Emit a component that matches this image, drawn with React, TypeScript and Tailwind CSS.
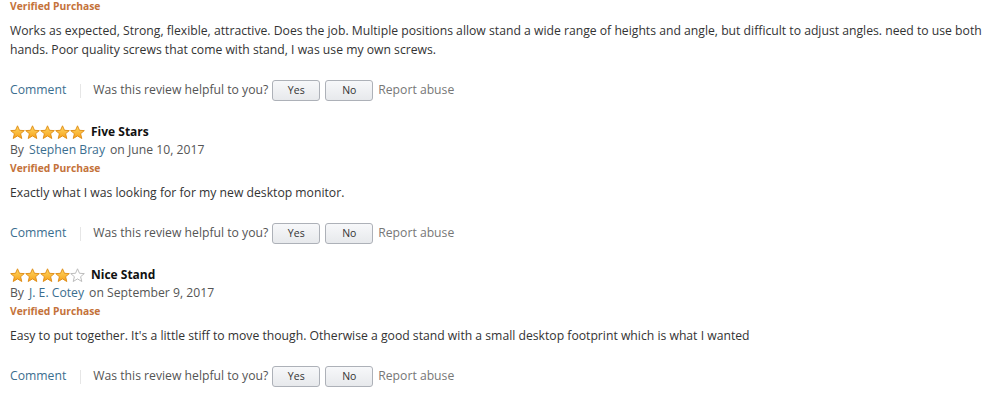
import type { ReactNode } from "react";

type Review = {
  title?: string;
  stars?: number;
  author?: string;
  date?: string;
  body: ReactNode;
};

const reviews: Review[] = [
  {
    body: (
      <>
        Works as expected, Strong, flexible, attractive. Does the job. Multiple positions allow stand a wide range of heights and angle, but difficult to adjust angles. need to use both hands. Poor quality screws that come with stand, I was use my own screws.
      </>
    ),
  },
  {
    title: "Five Stars",
    stars: 5,
    author: "Stephen Bray",
    date: "June 10, 2017",
    body: "Exactly what I was looking for for my new desktop monitor.",
  },
  {
    title: "Nice Stand",
    stars: 4,
    author: "J. E. Cotey",
    date: "September 9, 2017",
    body: "Easy to put together. It's a little stiff to move though. Otherwise a good stand with a small desktop footprint which is what I wanted",
  },
];

function Star({ filled, id }: { filled: boolean; id: string }) {
  const d = "M7.5 0.8 L9.5 5.3 L14.3 5.6 L10.6 8.7 L11.8 13.5 L7.5 10.9 L3.2 13.5 L4.4 8.7 L0.7 5.6 L5.5 5.3 Z";
  return (
    <svg width="15" height="14" viewBox="0 0 15 14">
      <defs>
        <linearGradient id={id} x1="0" y1="0" x2="0" y2="1">
          <stop offset="0" stopColor="#ffd863" />
          <stop offset="1" stopColor="#f7a21b" />
        </linearGradient>
      </defs>
      {filled ? (
        <path d={d} fill={`url(#${id})`} stroke="#de8a12" strokeWidth="0.9" strokeLinejoin="round" />
      ) : (
        <path d={d} fill="#fff" stroke="#b5b5b5" strokeWidth="0.9" strokeLinejoin="round" />
      )}
    </svg>
  );
}

function Stars({ count, keyPrefix }: { count: number; keyPrefix: string }) {
  return (
    <div className="flex items-center">
      {[0, 1, 2, 3, 4].map((i) => (
        <Star key={i} filled={i < count} id={`${keyPrefix}-star-${i}`} />
      ))}
    </div>
  );
}

function HelpfulRow() {
  return (
    <div className="flex items-center h-[21px] text-[12.2px]">
      <span className="text-[#3b6e8f]">Comment</span>
      <span className="ml-[14px] mr-[12px] w-px h-[14px] bg-[#e6e6e6]" />
      <span className="text-[#555]">Was this review helpful to you?</span>
      <button className="ml-[4px] w-[48px] h-[21px] rounded-[3px] border border-[#adb1b8] bg-gradient-to-b from-[#f7f8fa] to-[#e7e9ec] text-[10.5px] text-[#333]">
        Yes
      </button>
      <button className="ml-[5px] w-[48px] h-[21px] rounded-[3px] border border-[#adb1b8] bg-gradient-to-b from-[#f7f8fa] to-[#e7e9ec] text-[10.5px] text-[#333]">
        No
      </button>
      <span className="ml-[5px] text-[#777]">Report abuse</span>
    </div>
  );
}

function ReviewBlock({ review, idx }: { review: Review; idx: number }) {
  return (
    <div className="flex flex-col">
      {review.title && (
        <>
          <div className="flex items-center h-[19px] gap-[6px]">
            <Stars count={review.stars ?? 0} keyPrefix={`r${idx}`} />
            <span className="font-bold text-[#111] text-[12px]">{review.title}</span>
          </div>
          <div className="h-[19px] flex items-center text-[12.2px] text-[#555]">
            By<span className="mx-[5px] text-[#3b6e8f]">{review.author}</span>on {review.date}
          </div>
        </>
      )}
      <div className="h-[18px] flex items-center text-[10.3px] font-bold text-[#c4723a]">Verified Purchase</div>
      <div className="mt-[5px] text-[12.2px] leading-[19px] text-[#333]">{review.body}</div>
      <div className="mt-[21px]">
        <HelpfulRow />
      </div>
    </div>
  );
}

export default function App() {
  return (
    <div
      className="w-[1000px] h-[401px] bg-white overflow-hidden pl-[10px] pr-[14px] flex flex-col gap-[21px] -mt-[2px]"
      style={{ fontFamily: '"Open Sans", "Noto Sans", sans-serif' }}
    >
      {reviews.map((r, i) => (
        <ReviewBlock key={i} review={r} idx={i} />
      ))}
    </div>
  );
}
